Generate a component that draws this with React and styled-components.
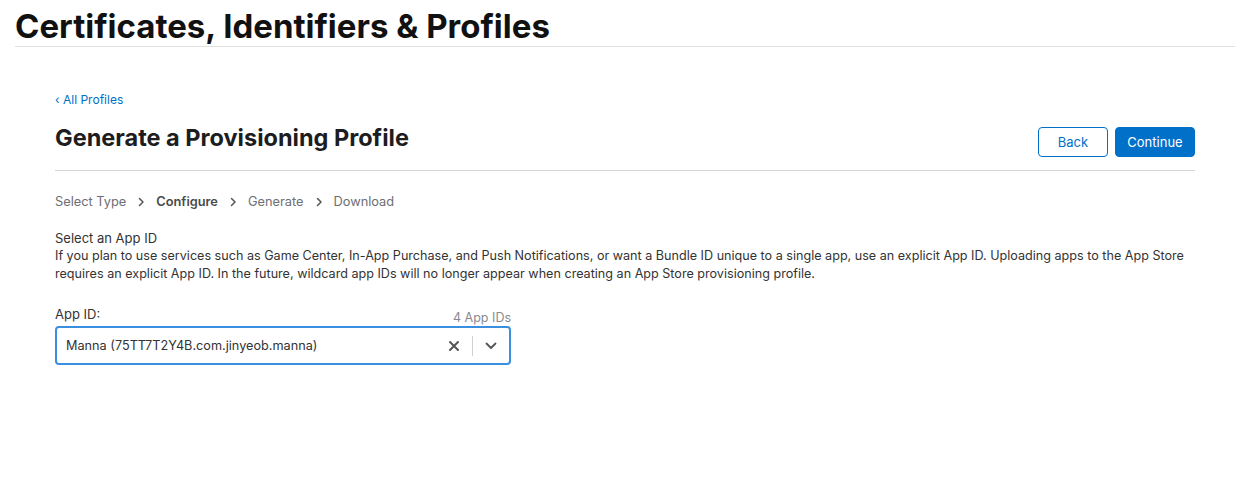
import React from 'react';
import styled, {createGlobalStyle} from 'styled-components';

const GlobalStyle = createGlobalStyle`
    body {
        margin: 0;
        background: #fff;
        font-family: Inter, "Noto Sans", "Liberation Sans", sans-serif;
        color: #1d1d1f;
    }
`;

const Page = styled.div`
    width: 1256px;
    height: 500px;
    overflow: hidden;
`;

const Header = styled.div`
    margin: 0 21px 0 15px;
    padding-top: 6px;
    height: 40px;
    border-bottom: 1px solid #e0e0e0;
`;

const MainTitle = styled.h1`
    margin: 0;
    font-size: 33px;
    font-weight: 700;
    line-height: 41px;
    color: #111;
`;

const Content = styled.div`
    margin: 0 61px 0 55px;
    padding-top: 46px;
`;

const BackLink = styled.a`
    font-size: 12px;
    color: #0070c9;
    text-decoration: none;
    line-height: 14px;
    display: block;
`;

const TitleRow = styled.div`
    display: flex;
    align-items: center;
    justify-content: space-between;
    padding: 17px 0 13px;
    border-bottom: 1px solid #d6d6d6;
`;

const PageTitle = styled.h2`
    margin: -6px 0 0;
    font-size: 23.5px;
    font-weight: 700;
    color: #1d1d1f;
    line-height: 30px;
`;

const Actions = styled.div`
    display: flex;
    gap: 7px;
    margin-top: 3px;
`;

const Button = styled.button`
    height: 30px;
    padding: 0;
    width: ${p => p.$width}px;
    border-radius: 4px;
    font-family: inherit;
    font-size: 13px;
    border: 1px solid #0070c9;
    background: ${p => p.$primary ? '#0070c9' : '#fff'};
    color: ${p => p.$primary ? '#fff' : '#0070c9'};
`;

const Steps = styled.div`
    display: flex;
    align-items: center;
    gap: 11px;
    font-size: 12.8px;
    color: #6e6e73;
    margin-top: 23px;
    line-height: 16px;
`;

const Step = styled.span`
    font-weight: ${p => p.$active ? 600 : 400};
    color: ${p => p.$active ? '#4a4a4a' : '#6e6e73'};
`;

const Section = styled.div`
    margin-top: 19px;
    font-size: 12.6px;
    line-height: 18px;
    color: #333;
`;

const SectionLabel = styled.div`
    font-size: 13px;
    color: #333;
`;

const Field = styled.div`
    width: 456px;
    margin-top: 23px;
`;

const FieldHead = styled.div`
    display: flex;
    justify-content: space-between;
    align-items: flex-end;
    font-size: 13px;
    line-height: 16px;
    color: #333;
`;

const Count = styled.span`
    color: #8a8a8e;
    font-size: 12.5px;
    margin-bottom: -4px;
`;

const Select = styled.div`
    margin-top: 4px;
    height: 39px;
    box-sizing: border-box;
    border: 2px solid #3b8fe0;
    border-radius: 4px;
    display: flex;
    align-items: center;
    font-size: 12.7px;
    color: #333;
`;

const SelectValue = styled.span`
    flex: 1;
    padding-left: 9px;
`;

const IconCell = styled.span`
    width: ${p => p.$w}px;
    display: flex;
    justify-content: center;
    align-items: center;
`;

const Divider = styled.span`
    width: 1px;
    height: 20px;
    background: #d0d0d0;
`;

function Chevron() {
    return (
        <svg width="8" height="10" viewBox="0 0 8 10">
            <path d="M2.5 1.5 L6 5 L2.5 8.5" fill="none" stroke="#555" strokeWidth="1.5" strokeLinecap="round" strokeLinejoin="round"/>
        </svg>
    );
}

export default function App() {
    return (
        <Page>
            <GlobalStyle/>
            <Header>
                <MainTitle>Certificates, Identifiers &amp; Profiles</MainTitle>
            </Header>
            <Content>
                <BackLink href="#">‹ All Profiles</BackLink>
                <TitleRow>
                    <PageTitle>Generate a Provisioning Profile</PageTitle>
                    <Actions>
                        <Button $width={70}>Back</Button>
                        <Button $width={80} $primary>Continue</Button>
                    </Actions>
                </TitleRow>
                <Steps>
                    <Step>Select Type</Step>
                    <Chevron/>
                    <Step $active>Configure</Step>
                    <Chevron/>
                    <Step>Generate</Step>
                    <Chevron/>
                    <Step>Download</Step>
                </Steps>
                <Section>
                    <SectionLabel>Select an App ID</SectionLabel>
                    If you plan to use services such as Game Center, In-App Purchase, and Push Notifications, or want a Bundle ID unique to a single app, use an explicit App ID. Uploading apps to the App Store requires an explicit App ID. In the future, wildcard app IDs will no longer appear when creating an App Store provisioning profile.
                </Section>
                <Field>
                    <FieldHead>
                        <span>App ID:</span>
                        <Count>4 App IDs</Count>
                    </FieldHead>
                    <Select>
                        <SelectValue>Manna (75TT7T2Y4B.com.jinyeob.manna)</SelectValue>
                        <IconCell $w={36}>
                            <svg width="12" height="12" viewBox="0 0 12 12">
                                <path d="M2 2 L10 10 M10 2 L2 10" stroke="#555" strokeWidth="2" strokeLinecap="round"/>
                            </svg>
                        </IconCell>
                        <Divider/>
                        <IconCell $w={36}>
                            <svg width="12" height="8" viewBox="0 0 12 8">
                                <path d="M1.5 1.5 L6 6 L10.5 1.5" fill="none" stroke="#555" strokeWidth="1.8" strokeLinecap="round" strokeLinejoin="round"/>
                            </svg>
                        </IconCell>
                    </Select>
                </Field>
            </Content>
        </Page>
    );
}
